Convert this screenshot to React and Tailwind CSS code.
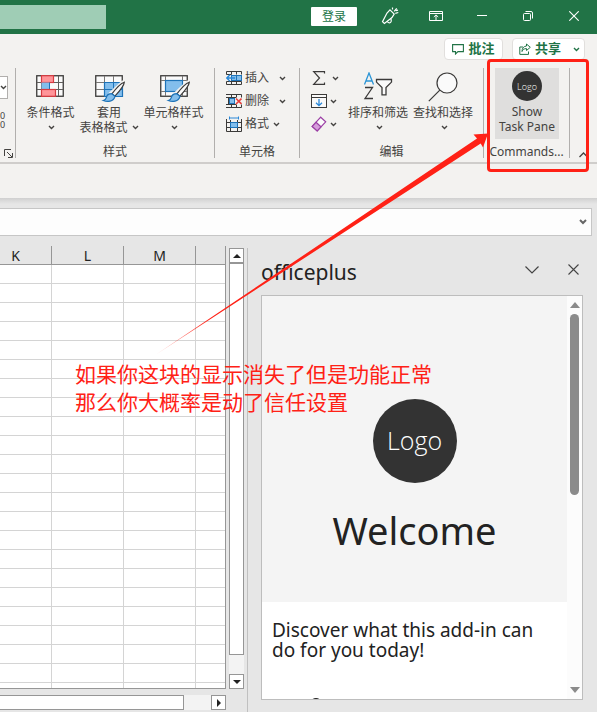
import React from "react";

const Chevron = ({ className = "" }) => (
  <svg className={`h-[5px] w-[7px] shrink-0 ${className}`} viewBox="0 0 7 5" fill="none" stroke="currentColor" strokeWidth="1.400">
    <path d="M1 1l2.500 2.500L6 1" />
  </svg>
);

/* ---------- title bar ---------- */

function WindowButton({ label, children }) {
  return (
    <button type="button" aria-label={label} className="flex h-8 w-[46px] items-center justify-center text-white">
      {children}
    </button>
  );
}

function TitleBar() {
  return (
    <header className="flex h-[34px] shrink-0 items-start bg-[#217346]">
      <input aria-label="搜索" className="mt-[5px] h-6 w-[106px] bg-[#9fcdb5] outline-none" />
      <div className="ml-auto flex items-start">
        <button type="button" className="mt-[7px] mr-[10px] h-[19px] w-[46px] rounded-[1px] bg-white text-xs leading-[19px] text-[#217346]">
          登录
        </button>
        <WindowButton label="绘图">
          <svg width="18" height="18" viewBox="0 0 18 18" fill="none" stroke="currentColor" strokeWidth="1.200">
            <path d="M9 2.800l4.200 4.300-2.200 3.500-7.600 5.800-1.900-1.800L6 6z" />
            <path d="M6.300 14.400c.6 1.800 3.200 2 3.800.2.400-1.200 0-2-.2-3" />
            <path d="M11.500 2.600V.5M13.200 4.400l2.500-3M14.300 6.300l3-.8M14.800 3.700l2.200-.6" />
          </svg>
        </WindowButton>
        <WindowButton label="功能区显示选项">
          <svg width="14" height="12" viewBox="0 0 14 12" fill="none" stroke="currentColor" strokeWidth="1">
            <path d="M.5 1.500h13v9H.5zM.5 3.500h13M7 10V5M4.800 7L7 4.900 9.200 7" />
          </svg>
        </WindowButton>
        <WindowButton label="最小化">
          <svg width="10" height="10" viewBox="0 0 10 10" stroke="currentColor">
            <path d="M0 4.500h10" />
          </svg>
        </WindowButton>
        <WindowButton label="还原">
          <svg width="10" height="10" viewBox="0 0 10 10" fill="none" stroke="currentColor">
            <rect x=".5" y="2.500" width="7" height="7" rx="1" />
            <path d="M2.500.5H8a1.500 1.500 0 0 1 1.500 1.500v5.500" />
          </svg>
        </WindowButton>
        <WindowButton label="关闭">
          <svg width="10" height="10" viewBox="0 0 10 10" stroke="currentColor" strokeWidth="1.100">
            <path d="M.3.3l9.400 9.400M9.700.3L.3 9.700" />
          </svg>
        </WindowButton>
      </div>
    </header>
  );
}

/* ---------- ribbon icons ---------- */

const GridLines = () => (
  <>
    <rect x=".75" y=".75" width="26.500" height="20.500" fill="#fafafa" stroke="#3b3a39" strokeWidth="1.300" />
    <path d="M9.500 1v20M18.500 1v20M1 7.500h26M1 14.500h26" stroke="#797775" strokeWidth="1" />
  </>
);

const Brush = () => (
  <>
    <path d="M29.300 7.200c-2.500.8-8 5.800-12.400 11.700l3 2.300C24.600 16 29.200 10 29.300 7.200z" fill="#fafafa" stroke="#3b3a39" strokeWidth="1.200" />
    <path d="M16.800 18.700c-3 0-5 1.300-5.500 4-.3 1.600-1.500 2.500-3 2.800 4 1.700 10.200 1.300 11.700-4.200z" fill="#83beec" stroke="#1e73b8" strokeWidth="1.200" />
  </>
);

const ConditionalIcon = () => (
  <svg className="mt-[3px]" width="28" height="22" viewBox="0 0 28 22" fill="none">
    <rect x=".75" y=".75" width="26.500" height="20.500" fill="#fafafa" stroke="#3b3a39" strokeWidth="1.300" />
    <path d="M5.500 1v20M22.500 1v20M1 7.500h26M1 14.500h26" stroke="#605e5c" />
    <rect x="5.500" y=".7" width="12" height="6.800" fill="#ff9599" stroke="#d83b41" strokeWidth="1.200" />
    <rect x="5.500" y="7.500" width="8" height="7" fill="#83beec" />
    <path d="M13.500 7.500v7" stroke="#1e73b8" />
    <rect x="5.500" y="14.500" width="14" height="6.800" fill="#ff9599" stroke="#d83b41" strokeWidth="1.200" />
  </svg>
);

const TableFormatIcon = () => (
  <svg className="mt-[3px] overflow-visible" width="28" height="28" viewBox="0 0 28 28" fill="none">
    <GridLines />
    <path d="M9.500 7.500h18v14h-18z" fill="#83beec" stroke="#1e73b8" strokeWidth="1.200" />
    <path d="M18.500 7.500v14M9.500 14.500h18" stroke="#1e73b8" />
    <path d="M29 7L15 20" stroke="#f3f2f0" strokeWidth="5" />
    <Brush />
  </svg>
);

const CellStyleIcon = () => (
  <svg className="mt-[3px] overflow-visible" width="28" height="28" viewBox="0 0 28 28" fill="none">
    <rect x=".75" y=".75" width="26.500" height="20.500" fill="#fafafa" stroke="#3b3a39" strokeWidth="1.300" />
    <path d="M5.500 1v20M22.500 1v20M1 5.500h26M1 16.500h26" stroke="#797775" />
    <rect x="5.500" y="5.500" width="17" height="11" fill="#83beec" stroke="#1e73b8" strokeWidth="1.200" />
    <path d="M29 7L15 20" stroke="#f3f2f0" strokeWidth="5" />
    <Brush />
  </svg>
);

const InsertIcon = () => (
  <svg width="16" height="14" viewBox="0 0 16 14" fill="none" stroke="#3b3a39">
    <path d="M.5 3.500v-3h15v3M.5 10.500v3h15v-3M5.500.5v3M10.500.5v3M5.500 10.500v3M10.500 10.500v3M.5 3.500h5M.5 10.500h15" />
    <rect x="5.500" y="4.500" width="10" height="5" fill="#83beec" stroke="#1e73b8" />
    <path d="M10.500 4.500v5" stroke="#1e73b8" />
    <path d="M9 7H1M4 3.800L.8 7 4 10.200" stroke="#2b88d8" strokeWidth="1.400" />
  </svg>
);

const DeleteIcon = () => (
  <svg width="16" height="14" viewBox="0 0 16 14" fill="none" stroke="#3b3a39">
    <path d="M0 .5h15.500v3M0 13.500h15.500v-3M5.500.5v3M10.500.5v3M5.500 10.500v3M10.500 10.500v3M0 3.500h10M0 10.500h10M2.500 3.500v7" />
    <rect x="3.500" y="4.500" width="5" height="5" fill="#83beec" stroke="#1e73b8" />
    <path d="M10 4.500l5.500 5.500M15.500 4.500L10 10" stroke="#e8413d" strokeWidth="1.600" />
  </svg>
);

const FormatIcon = () => (
  <svg width="16" height="16" viewBox="0 0 16 16" fill="none" stroke="#3b3a39">
    <path d="M.5 3v12.500h15V3M.5 6.500h15M.5 11.500h15M4.500 4v11.500M11.500 4v11.500" />
    <rect x="4.500" y="6.500" width="7" height="5" fill="#83beec" stroke="#1e73b8" />
    <path d="M3.500.5v3M12.500.5v3M3.500 2h9" stroke="#2b88d8" />
  </svg>
);

const SumIcon = () => (
  <svg width="16" height="14" viewBox="0 0 16 14" fill="none" stroke="#3b3a39" strokeWidth="1.200">
    <path d="M13.500 2.500V.7H2.700L8.500 7l-5.800 6.300h10.800v-1.800" />
  </svg>
);

const FillIcon = () => (
  <svg width="16" height="14" viewBox="0 0 16 14" fill="#fafafa" stroke="#3b3a39">
    <rect x=".5" y=".5" width="15" height="13" />
    <path d="M.5 3.500h15" />
    <path d="M8 5v6.500M5 8.700l3 3 3-3" fill="none" stroke="#2b88d8" strokeWidth="1.300" />
  </svg>
);

const EraserIcon = () => (
  <svg width="16" height="16" viewBox="0 0 16 16" fill="#fafafa" stroke="#9b3fa5" strokeWidth="1.200">
    <path d="M9.700 1.200l5 4.600-8.500 9.200-5-4.600z" />
    <path d="M5 6.300l5 4.600L6.200 15l-5-4.600z" fill="#d59ddb" />
  </svg>
);

const SortFilterIcon = () => (
  <svg width="30" height="28" viewBox="0 0 30 28" fill="none" strokeWidth="1.300">
    <path d="M1.500 12.500L6 1l4.500 11.500M3.100 9h5.800" stroke="#2b95d6" />
    <path d="M2 15.500h7.500L2 26.500h8" stroke="#3b3a39" />
    <path d="M13.500 7.500h15v2.600l-5.500 5.500v7.200h-4v-7.200l-5.500-5.500z" fill="#fafafa" stroke="#3b3a39" />
  </svg>
);

const FindIcon = () => (
  <svg width="30" height="30" viewBox="0 0 30 30" fill="#fafafa" stroke="#3b3a39" strokeWidth="1.200">
    <circle cx="19" cy="11" r="10" />
    <path d="M11.800 18.200L.8 29.200" />
  </svg>
);

/* ---------- ribbon ---------- */

function Group({ title, className = "", children }) {
  return (
    <section aria-label={title} className={`flex h-[90px] shrink-0 flex-col border-r border-[#b1afad] ${className}`}>
      <div className="flex flex-1">{children}</div>
      <h2 className="text-center text-xs leading-3 whitespace-nowrap">{title}</h2>
    </section>
  );
}

function LargeButton({ icon, lines, inlineChevron = false }) {
  return (
    <button type="button" className="flex flex-col items-center text-xs leading-[15px] whitespace-nowrap">
      <span className="flex h-[37px] items-start justify-center pt-1">{icon}</span>
      <span>{lines[0]}</span>
      <span className="flex h-[15px] items-center gap-1">
        {lines[1]}
        <Chevron className={inlineChevron ? "" : "ml-[2px]"} />
      </span>
    </button>
  );
}

function SmallButton({ icon, label, name, className }) {
  return (
    <button type="button" aria-label={name} className={`flex h-5 items-center text-xs leading-5 ${className}`}>
      <span className="mr-[3px] flex w-4 shrink-0 justify-center">{icon}</span>
      {label}
      <Chevron className="ml-auto" />
    </button>
  );
}

function Ribbon() {
  return (
    <div className="shrink-0 border-b-2 border-[#cfcdcb] bg-[#f3f2f0] text-[#444341]">
      <div className="flex h-[34px] justify-end gap-[9px] pt-1 pr-3 text-[13px] font-bold text-[#217346]">
        <button type="button" className="flex h-[22px] w-[59px] items-center justify-center gap-1 rounded-sm border border-[#e1dfdd] bg-white">
          <svg width="12" height="11" viewBox="0 0 12 11" fill="none" stroke="currentColor" strokeWidth="1.100">
            <path d="M.6.6h10.800v7H6L3.500 10V7.600H.6z" />
          </svg>
          批注
        </button>
        <button type="button" className="flex h-[22px] w-[73px] items-center gap-1 rounded-sm border border-[#e1dfdd] bg-white pr-1 pl-[6px]">
          <svg width="12" height="12" viewBox="0 0 12 12" fill="none" stroke="currentColor" strokeWidth="1">
            <path d="M4 4H.8v7.400h8.700V8.500M7.500 1l3.800 3.300-3.800 3.200V5.600C5 5.500 3.800 6.700 3 8.500c0-3 1.500-5.300 4.500-5.500z" />
          </svg>
          共享
          <Chevron className="ml-auto" />
        </button>
      </div>

      <div className="flex h-[94px] justify-end">
        <div className="flex h-[90px] min-w-0 flex-1 flex-col items-start overflow-hidden border-r border-[#b1afad]">
          <button type="button" aria-label="数字格式" className="mt-2 flex h-[23px] w-2 items-center justify-end border border-l-0 border-[#b1afad] bg-white">
            <Chevron />
          </button>
          <p className="mt-3 w-1 text-right text-[9px] leading-[9px]">
            0<br />0
          </p>
          <button type="button" aria-label="数字设置" className="mt-auto ml-1">
            <svg width="9" height="9" viewBox="0 0 9 9" fill="none" stroke="currentColor">
              <path d="M.5 7V.5H7M3 3l5 5M8.500 4v4.500H4" />
            </svg>
          </button>
        </div>

        <Group title="样式" className="w-[199px]">
          <div className="flex w-full justify-center gap-[5px]">
            <LargeButton icon={<ConditionalIcon />} lines={["条件格式"]} />
            <LargeButton icon={<TableFormatIcon />} lines={["套用", "表格格式"]} inlineChevron />
            <LargeButton icon={<CellStyleIcon />} lines={["单元格样式"]} />
          </div>
        </Group>

        <Group title="单元格" className="w-[85px]">
          <div className="flex flex-col gap-[3px] pl-[11px]">
            <SmallButton icon={<InsertIcon />} label="插入" className="w-[60px]" />
            <SmallButton icon={<DeleteIcon />} label="删除" className="w-[60px]" />
            <SmallButton icon={<FormatIcon />} label="格式" className="w-[54px]" />
          </div>
        </Group>

        <Group title="编辑" className="w-[184px]">
          <div className="flex flex-col gap-[3px] pl-[11px]">
            <SmallButton icon={<SumIcon />} name="求和" className="w-7" />
            <SmallButton icon={<FillIcon />} name="填充" className="w-[26px]" />
            <SmallButton icon={<EraserIcon />} name="清除" className="w-[26px]" />
          </div>
          <div className="ml-[9px] flex gap-[5px]">
            <LargeButton icon={<SortFilterIcon />} lines={["排序和筛选"]} />
            <LargeButton icon={<FindIcon />} lines={["查找和选择"]} />
          </div>
        </Group>

        <Group title="Commands..." className="w-[86px]">
          <button type="button" className="ml-[11px] flex h-[71px] w-16 flex-col items-center bg-[#dfdedd] pt-[3px] text-xs leading-[15px]">
            <span className="mb-[3px] flex h-[30px] w-[30px] shrink-0 items-center justify-center rounded-full bg-[#333] font-['Open_Sans'] text-[9px] font-light text-white">
              Logo
            </span>
            Show
            <br />
            Task Pane
          </button>
        </Group>

        <button type="button" aria-label="折叠功能区" className="flex w-[27px] items-end justify-center pb-1">
          <svg width="9" height="6" viewBox="0 0 9 6" fill="none" stroke="currentColor" strokeWidth="1.300">
            <path d="M.5 5l4-4 4 4" />
          </svg>
        </button>
      </div>
    </div>
  );
}

function FormulaBar() {
  return (
    <div className="shrink-0">
      <div className="h-[34px] bg-[#f3f2f0]" />
      <div className="h-[6px] bg-linear-to-b from-[#d0d0d0] to-[#e6e6e6]" />
      <div className="mt-1 mr-[5px] flex h-7 items-center border border-l-0 border-[#c6c6c6] bg-[#fdfdfd] pr-1">
        <input aria-label="编辑栏" className="min-w-0 flex-1 outline-none" />
        <button type="button" aria-label="展开编辑栏" className="text-[#666]">
          <svg width="8" height="6" viewBox="0 0 8 6" fill="none" stroke="currentColor" strokeWidth="2">
            <path d="M1 1l3 3 3-3" />
          </svg>
        </button>
      </div>
    </div>
  );
}

/* ---------- worksheet ---------- */

const rows = Array.from({ length: 23 }, (_, i) => i);
const columns = ["K", "L", "M", ""];

function Arrow({ d }) {
  return (
    <svg width="8" height="8" viewBox="0 0 8 8" fill="#222">
      <path d={d} />
    </svg>
  );
}

const scrollButton = "flex h-[15px] w-[15px] shrink-0 items-center justify-center border border-[#969696] bg-white";

function Sheet() {
  return (
    <main className="flex min-w-0 flex-1 flex-col pb-[2px]">
      <div className="flex min-h-0 flex-1">
        <div className="flex min-w-0 flex-1 flex-col items-end overflow-hidden border-r border-b border-[#969696] bg-white">
          <table className="w-[245px] shrink-0 table-fixed border-separate border-spacing-0">
            <colgroup>
              <col className="w-[72px]" />
              <col className="w-[72px]" />
              <col className="w-[72px]" />
              <col className="w-[29px]" />
            </colgroup>
            <thead>
              <tr className="h-[19px]">
                {columns.map((c, i) => (
                  <th
                    key={i}
                    scope="col"
                    className="border-r border-b border-[#969696] bg-[#e6e6e6] p-0 pt-[2px] text-sm leading-4 font-normal text-[#222] last:border-r-0"
                  >
                    {c}
                  </th>
                ))}
              </tr>
            </thead>
            <tbody>
              {rows.map((r) => (
                <tr key={r} className="h-[19px]">
                  {columns.map((c, i) => (
                    <td key={i} className="border-r border-b border-[#d4d4d4] p-0 last:border-r-0" />
                  ))}
                </tr>
              ))}
            </tbody>
          </table>
        </div>
        <div className="mt-[2px] mr-[3px] ml-[3px] flex w-[15px] shrink-0 flex-col bg-[#f3f3f3]">
          <button type="button" aria-label="向上滚动" className={scrollButton}>
            <Arrow d="M0 6l4-4 4 4z" />
          </button>
          <div className="w-full flex-1 border border-[#969696] bg-white" />
          <button type="button" aria-label="向下滚动" className={`mt-[19px] ${scrollButton}`}>
            <Arrow d="M0 2l4 4 4-4z" />
          </button>
        </div>
      </div>
      <div className="mt-[6px] mr-[21px] flex h-[15px] bg-[#f3f3f3]">
        <div className="flex-1 border border-l-0 border-[#969696] bg-white" />
        <button type="button" aria-label="向右滚动" className={`ml-[27px] ${scrollButton}`}>
          <Arrow d="M2 0l4 4-4 4z" />
        </button>
      </div>
    </main>
  );
}

/* ---------- task pane ---------- */

function TaskPane() {
  return (
    <aside className="mt-[2px] flex w-[350px] shrink-0 flex-col border-l border-[#c0c0c0] pr-[14px] pb-3 pl-[13px] text-[#222]">
      <div className="flex h-[47px] shrink-0 items-center">
        <h1 className="text-[21px] leading-7">officeplus</h1>
        <button type="button" aria-label="任务窗格选项" className="mb-1 ml-auto text-[#444]">
          <svg width="14" height="8" viewBox="0 0 14 8" fill="none" stroke="currentColor" strokeWidth="1.200">
            <path d="M.5.500L7 7 13.500.500" />
          </svg>
        </button>
        <button type="button" aria-label="关闭窗格" className="mr-1 mb-1 ml-[29px] text-[#444]">
          <svg width="11" height="11" viewBox="0 0 11 11" stroke="currentColor" strokeWidth="1.100">
            <path d="M.5.500l10 10M10.500.500l-10 10" />
          </svg>
        </button>
      </div>

      <div className="flex min-h-0 flex-1 border border-[#bdbdbd] bg-white">
        <div className="min-w-0 flex-1 overflow-hidden">
          <div className="flex h-[306px] flex-col items-center bg-[#f4f4f4] pt-[103px]">
            <div className="flex h-[84px] w-[84px] items-center justify-center rounded-full bg-[#333] font-['Open_Sans'] text-[25px] font-light text-white">
              Logo
            </div>
            <h2 className="mt-[22px] text-[38px] leading-[50px]">Welcome</h2>
          </div>
          <p className="pt-[18px] pl-[10px] text-[19px] leading-5">
            Discover what this add-in can
            <br />
            do for you today!
          </p>
          <svg className="mt-[38px] ml-12" width="12" height="12" viewBox="0 0 12 12" fill="none" stroke="#222" strokeWidth="2">
            <circle cx="6" cy="6" r="5" />
          </svg>
        </div>
        <div className="flex w-[15px] shrink-0 flex-col items-center bg-[#fcfcfc] py-[6px]">
          <svg width="10" height="6" viewBox="0 0 10 6" fill="#8b8b8b">
            <path d="M5 0l5 6H0z" />
          </svg>
          <div className="mt-[6px] h-[181px] w-[9px] rounded-full bg-[#8b8b8b]" />
          <svg className="mt-auto" width="10" height="6" viewBox="0 0 10 6" fill="#8b8b8b">
            <path d="M5 6L0 0h10z" />
          </svg>
        </div>
      </div>
    </aside>
  );
}

/* ---------- red mark-up drawn over the window ---------- */

function Annotation() {
  return (
    <div className="pointer-events-none absolute inset-0 overflow-hidden">
      <div className="absolute top-[59px] right-[8px] h-[113px] w-[102px] rounded-sm border-3 border-[#ff2116]" />
      <svg className="absolute top-[130px] right-[107px]" width="340" height="230" viewBox="150 130 340 230">
        <defs>
          <linearGradient id="tail" gradientUnits="userSpaceOnUse" x1="156" y1="355" x2="210" y2="318">
            <stop offset="0" stopColor="#ff2116" stopOpacity="0.300" />
            <stop offset="1" stopColor="#ff2116" />
          </linearGradient>
        </defs>
        <path d="M156 354.500L477 138.600 473.500 134.500 488 133.500 483 147.500 480.700 143.500z" fill="url(#tail)" />
      </svg>
      <p className="absolute top-[360px] right-[164px] w-[358px] text-[21px] leading-7 whitespace-nowrap text-[#ff2116]">
        如果你这块的显示消失了但是功能正常
        <br />
        那么你大概率是动了信任设置
      </p>
    </div>
  );
}

export default function App() {
  return (
    <div className="relative flex h-screen flex-col overflow-hidden bg-[#e6e6e6] font-['Noto_Sans','Noto_Sans_CJK_SC',sans-serif]">
      <TitleBar />
      <Ribbon />
      <FormulaBar />
      <div className="flex min-h-0 flex-1 pt-[10px]">
        <Sheet />
        <TaskPane />
      </div>
      <Annotation />
    </div>
  );
}
